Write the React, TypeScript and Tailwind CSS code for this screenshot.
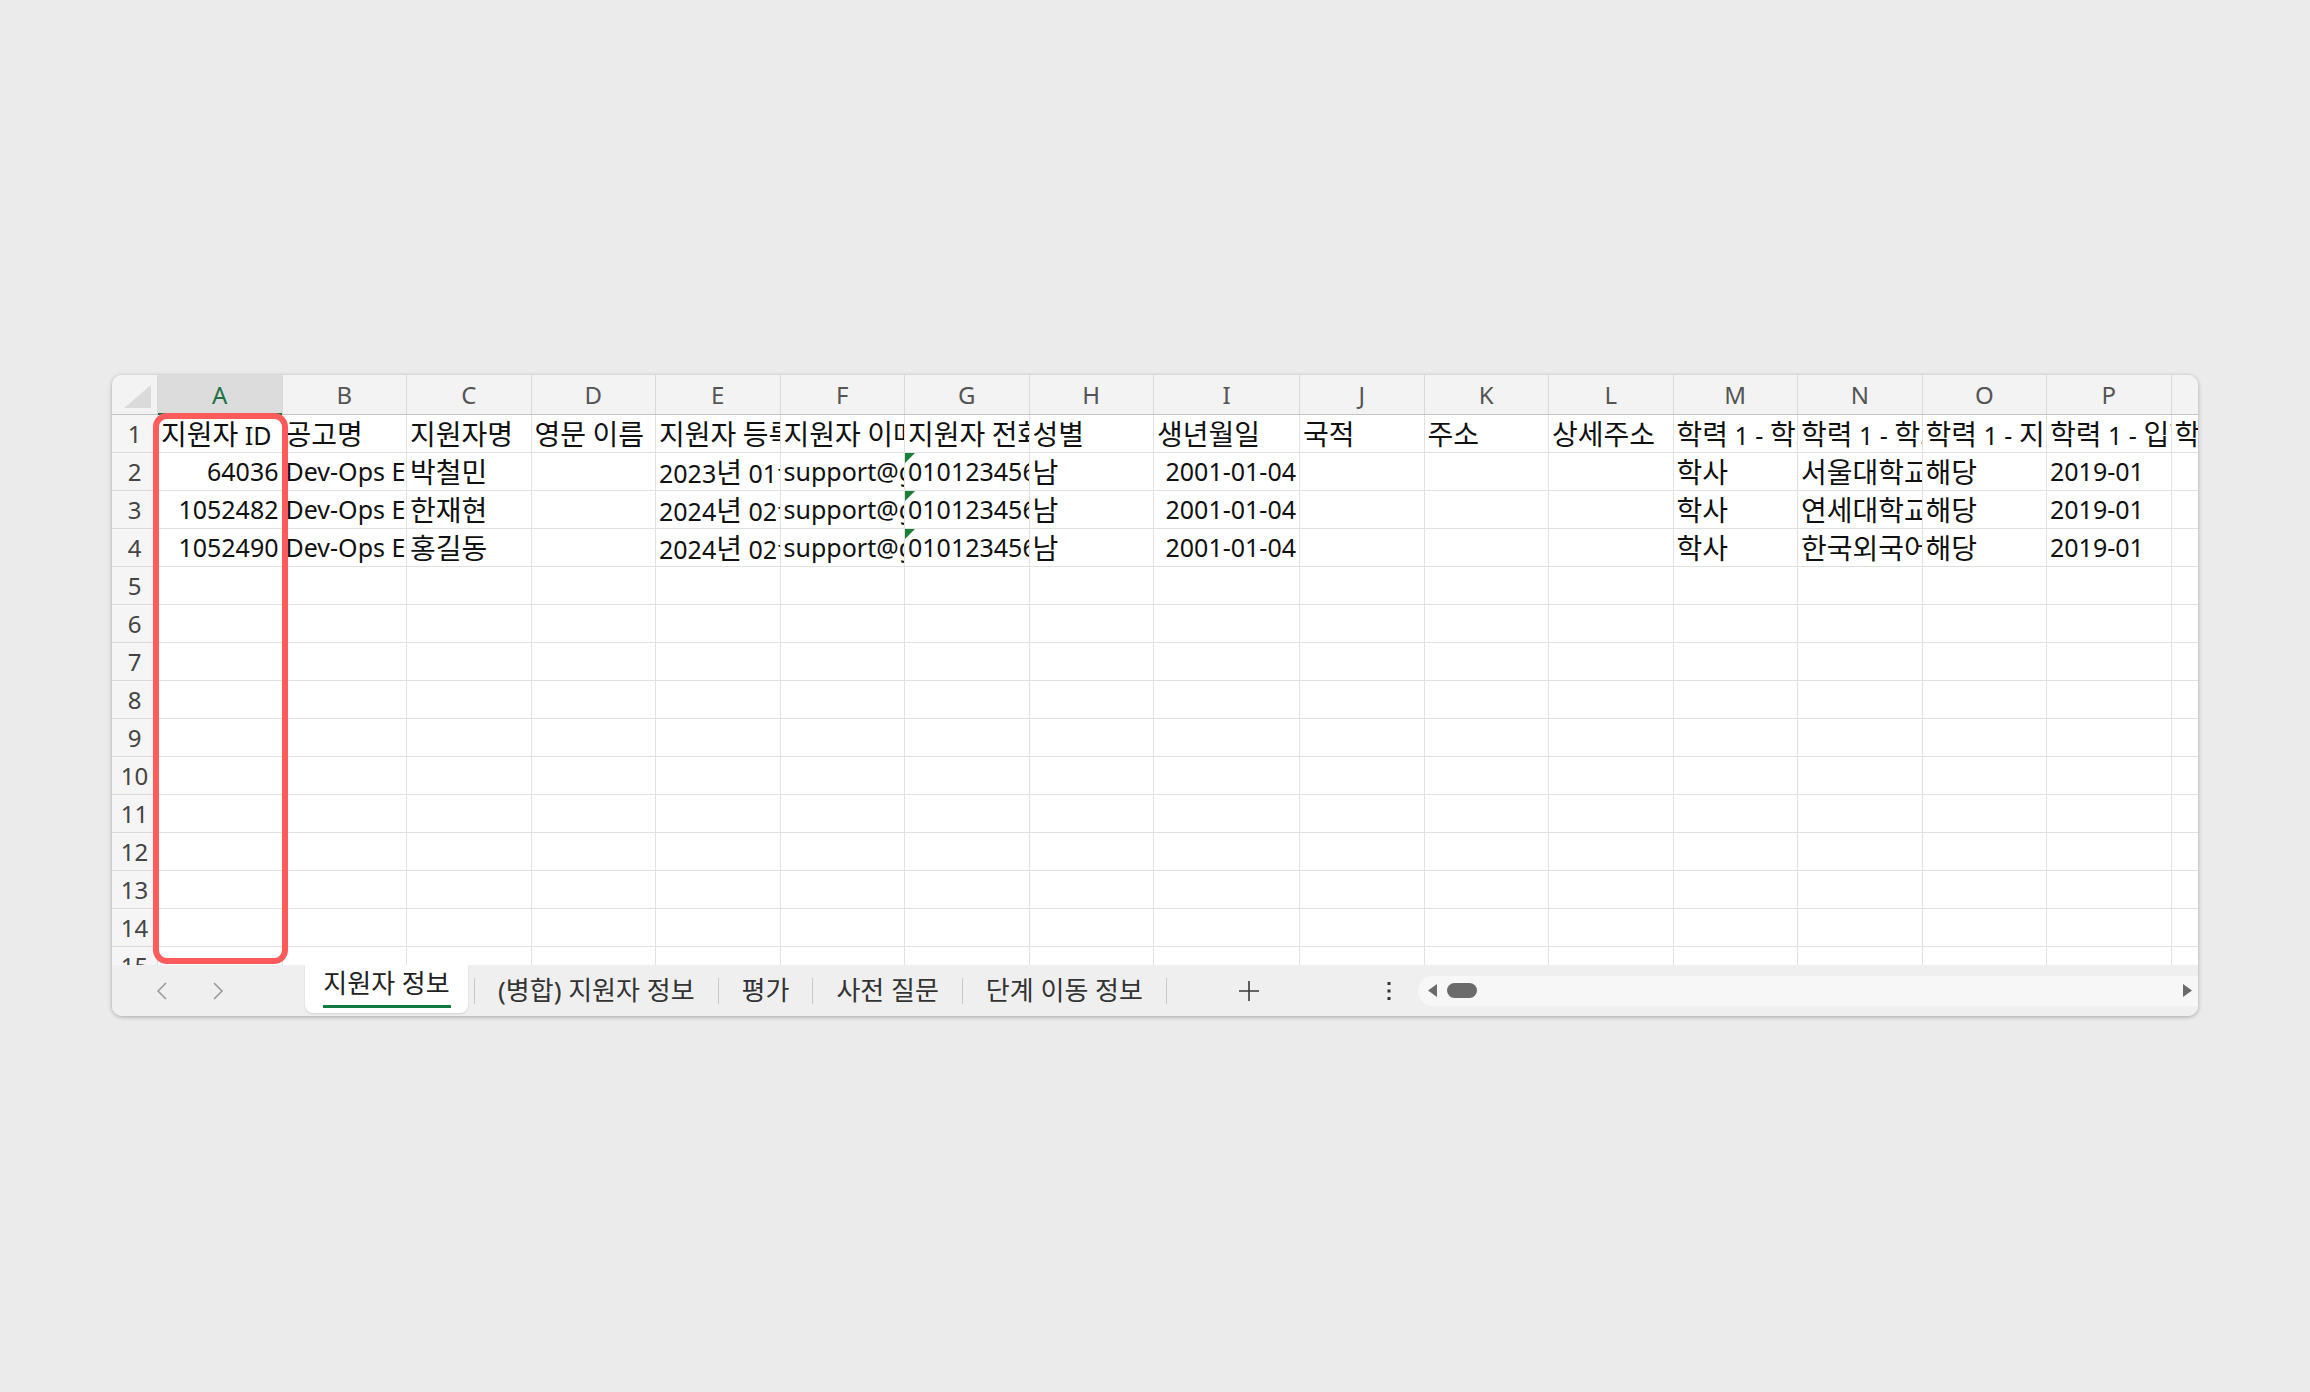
import React from "react";
import clsx from "clsx";

type Cell = {
  text?: string;
  right?: boolean;
  flag?: boolean;
};

const COLUMNS = [
  { key: "A", width: "w-[124.5px]" },
  { key: "B", width: "w-[124.5px]" },
  { key: "C", width: "w-[124.5px]" },
  { key: "D", width: "w-[124.5px]" },
  { key: "E", width: "w-[124.5px]" },
  { key: "F", width: "w-[124.5px]" },
  { key: "G", width: "w-[124.5px]" },
  { key: "H", width: "w-[124.5px]" },
  { key: "I", width: "w-[146px]" },
  { key: "J", width: "w-[124.5px]" },
  { key: "K", width: "w-[124.5px]" },
  { key: "L", width: "w-[124.5px]" },
  { key: "M", width: "w-[124.5px]" },
  { key: "N", width: "w-[124.5px]" },
  { key: "O", width: "w-[124.5px]" },
  { key: "P", width: "w-[124.5px]" },
  { key: "Q", width: "w-[124.5px]" },
];

const HEADER_ROW: Cell[] = [
  "지원자 ID",
  "공고명",
  "지원자명",
  "영문 이름",
  "지원자 등록일",
  "지원자 이메일",
  "지원자 전화번호",
  "성별",
  "생년월일",
  "국적",
  "주소",
  "상세주소",
  "학력 1 - 학교구분",
  "학력 1 - 학교명",
  "학력 1 - 지역구분",
  "학력 1 - 입학년월",
  "학력 1 - 졸업년월",
].map((text) => ({ text }));

const applicant = (
  id: string,
  registered: string,
  name: string,
  school: string
): Cell[] => [
  { text: id, right: true },
  { text: "Dev-Ops Engineer" },
  { text: name },
  {},
  { text: registered },
  { text: "support@greetinghr.com" },
  { text: "01012345678", flag: true },
  { text: "남" },
  { text: "2001-01-04", right: true },
  {},
  {},
  {},
  { text: "학사" },
  { text: school },
  { text: "해당" },
  { text: "2019-01" },
  {},
];

const ROWS: Cell[][] = [
  HEADER_ROW,
  applicant("64036", "2023년 01월 12일", "박철민", "서울대학교"),
  applicant("1052482", "2024년 02월 05일", "한재현", "연세대학교"),
  applicant("1052490", "2024년 02월 07일", "홍길동", "한국외국어대학교"),
];

const SHEETS = ["(병합) 지원자 정보", "평가", "사전 질문", "단계 이동 정보"];

// hangul runs are set a little larger so they sit with the latin glyphs
// the way the spreadsheet font draws them
const renderText = (text: string) =>
  text.split(/([가-힣]+)/).map((part, i) =>
    /[가-힣]/.test(part) ? (
      <span key={i} className="text-[28px]">
        {part}
      </span>
    ) : (
      part
    )
  );

const GridRow = ({ num, cells }: { num: number; cells: Cell[] }) => (
  <div className="flex h-[38px] shrink-0">
    <div className="flex w-[46px] shrink-0 items-center justify-center border-b border-r border-[#dadada] bg-[#f5f5f5] text-[24px] text-[#444]">
      {num}
    </div>
    {COLUMNS.map((col, i) => {
      const cell = cells[i] ?? {};
      return (
        <div
          key={col.key}
          className={clsx(
            col.width,
            "relative flex shrink-0 items-center overflow-hidden whitespace-nowrap border-b border-r border-[#e1e1e1] bg-white text-[25px] leading-none text-[#111]",
            cell.right ? "justify-end pr-[3px]" : "pl-[3px]"
          )}
        >
          {cell.flag && (
            <span className="absolute left-0 top-0 h-0 w-0 border-r-[10px] border-t-[10px] border-r-transparent border-t-[#1a7f37]" />
          )}
          {cell.text && <span>{renderText(cell.text)}</span>}
        </div>
      );
    })}
  </div>
);

const Chevron = ({ dir }: { dir: "left" | "right" }) => (
  <svg width="14" height="22" viewBox="0 0 14 22" fill="none">
    <polyline
      points={dir === "left" ? "11,3 3,11 11,19" : "3,3 11,11 3,19"}
      stroke="#9a9a9a"
      strokeWidth="1.6"
    />
  </svg>
);

const App = () => {
  return (
    <div className="min-h-screen w-full bg-[#ebebeb] pl-[112px] pt-[375px] font-['Noto_Sans','Noto_Sans_CJK_KR',sans-serif]">
      <div className="flex h-[641px] w-[2086px] flex-col overflow-hidden rounded-[10px] bg-[#f0f0f0] shadow-[0_1px_4px_rgba(0,0,0,0.3)]">
        {/* sheet grid */}
        <div className="relative flex h-[590px] shrink-0 flex-col overflow-hidden">
          <div className="flex h-[40px] shrink-0 border-b border-[#c4c4c4] bg-[#f3f3f3]">
            <div className="relative w-[46px] shrink-0 border-r border-[#dadada]">
              <svg
                className="absolute bottom-[6px] right-[6px]"
                width="27"
                height="23"
                viewBox="0 0 27 23"
              >
                <polygon points="27,0 27,23 0,23" fill="#dadada" />
              </svg>
            </div>
            {COLUMNS.map((col) => (
              <div
                key={col.key}
                className={clsx(
                  col.width,
                  "relative flex shrink-0 items-center justify-center border-r border-[#dadada] text-[24px]",
                  col.key === "A" ? "bg-[#dcdcdc] text-[#1e7145]" : "text-[#555]"
                )}
              >
                {col.key}
                {col.key === "A" && (
                  <span className="absolute bottom-[-1px] left-0 right-0 h-[2px] bg-[#1e7145]" />
                )}
              </div>
            ))}
          </div>

          {Array.from({ length: 15 }, (_, i) => (
            <GridRow key={i} num={i + 1} cells={ROWS[i] ?? []} />
          ))}

          {/* highlight around column A */}
          <div className="absolute left-[41px] top-[38px] h-[551px] w-[135px] rounded-[14px] border-[6px] border-[#ff5b5b]" />
        </div>

        {/* sheet tabs */}
        <div className="flex h-[51px] shrink-0 items-center bg-[#efefef] text-[26px] text-[#333]">
          <div className="flex w-[193px] shrink-0 items-center gap-[42px] pl-[43px]">
            <Chevron dir="left" />
            <Chevron dir="right" />
          </div>

          <div className="flex h-[48px] w-[163px] shrink-0 flex-col items-center self-start rounded-b-[8px] bg-white pt-[5px] text-[#222] shadow-[0_1px_2px_rgba(0,0,0,0.12)]">
            <span className="whitespace-nowrap leading-none">지원자 정보</span>
            <span className="mt-[9px] h-[3px] w-[128px] bg-[#107c41]" />
          </div>

          <span className="ml-[6px] h-[26px] w-px shrink-0 bg-[#c8c8c8]" />
          {SHEETS.map((name) => (
            <React.Fragment key={name}>
              <span className="whitespace-nowrap px-[23px]">{name}</span>
              <span className="h-[26px] w-px shrink-0 bg-[#c8c8c8]" />
            </React.Fragment>
          ))}

          <div className="flex w-[164px] shrink-0 justify-center">
            <svg width="22" height="22" viewBox="0 0 22 22">
              <path d="M11 1v20M1 11h20" stroke="#3a3a3a" strokeWidth="1.6" />
            </svg>
          </div>
          <div className="ml-auto flex w-[58px] shrink-0 justify-center">
            <svg width="4" height="18" viewBox="0 0 4 18">
              <rect x="0.5" y="0" width="3" height="3" fill="#333" />
              <rect x="0.5" y="7.5" width="3" height="3" fill="#333" />
              <rect x="0.5" y="15" width="3" height="3" fill="#333" />
            </svg>
          </div>

          {/* horizontal scrollbar */}
          <div className="flex h-[30px] w-[780px] shrink-0 items-center rounded-l-[15px] bg-[#f7f7f7] pl-[9px] pr-[5px]">
            <svg width="10" height="13" viewBox="0 0 10 13">
              <polygon points="10,0 10,13 1,6.5" fill="#6b6b6b" />
            </svg>
            <span className="ml-[10px] h-[15px] w-[30px] rounded-full bg-[#6b6b6b]" />
            <svg className="ml-auto" width="10" height="13" viewBox="0 0 10 13">
              <polygon points="0,0 0,13 9,6.5" fill="#6b6b6b" />
            </svg>
          </div>
        </div>
      </div>
    </div>
  );
};

export default App;
